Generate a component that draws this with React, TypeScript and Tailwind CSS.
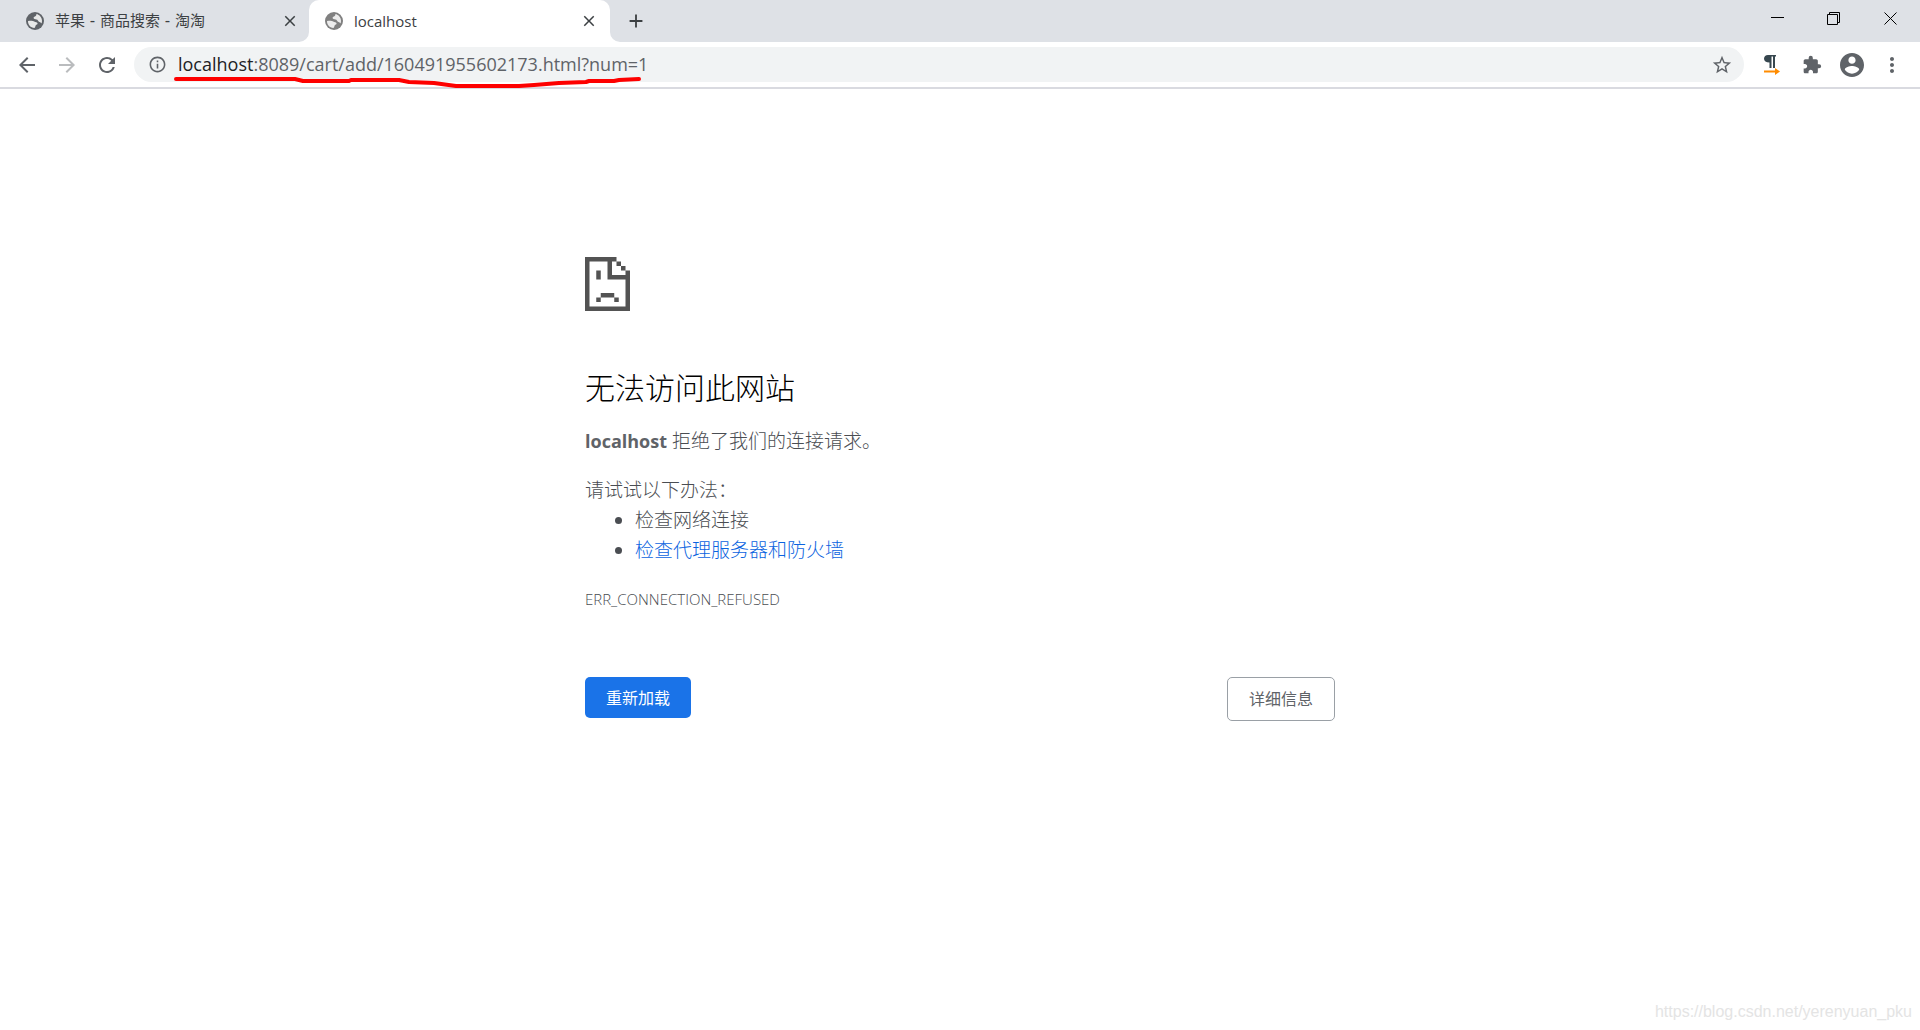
import React from "react";
import {
  MdArrowBack,
  MdArrowForward,
  MdRefresh,
  MdInfoOutline,
  MdStarBorder,
  MdExtension,
  MdMoreVert,
  MdClose,
  MdAdd,
} from "react-icons/md";

function Globe({ className }: { className: string }) {
  return (
    <svg viewBox="0 0 18 18" className={className} aria-hidden="true">
      <circle cx="9" cy="9" r="9" fill="currentColor" />
      <path
        className="fill-white/85"
        d="M2 9C4.5 8.6 7 8.4 8.2 9.4C9.4 10.4 11.6 9.8 11.6 11.4C11.6 12.6 10 12.4 9.6 13.4C9.3 14.2 9.2 15.4 8.4 16C4.6 15.8 1.8 12.6 2 9ZM10.4 2.1C13.6 2.8 16 5.6 16 9C16 10 15.8 10.8 15.5 11.6C15 11 14.6 10.2 13.6 10C12.4 9.8 12.2 8.6 11.4 7.8C10.4 7 8.4 7.4 7.8 6.4C7.2 5.4 8 4.6 9 4.4C10 4.2 10.4 3.4 10.4 2.1Z"
      />
    </svg>
  );
}

function SadPage() {
  return (
    <svg viewBox="0 0 20 24" className="h-[54px] w-[45px] text-[#535353]" fill="currentColor" aria-hidden="true">
      <path d="M0 0H14V2H12V8H18V6H20V24H0ZM2 2V22H18V10H10V2ZM14 2h2v2h-2ZM16 4h2v2h-2ZM5 6h2v4H5ZM7 16h6v2H7ZM5 18h2v2H5ZM13 18h2v2h-2Z" fillRule="evenodd" />
    </svg>
  );
}

function TabStrip() {
  return (
    <header className="flex h-[42px] items-stretch bg-[#dee1e6] text-[#3c4043]">
      <div role="tablist" className="flex">
        <div className="flex w-[309px] items-center pl-[26px] pr-[9px]">
          <button role="tab" aria-selected="false" className="flex flex-1 items-center gap-[11px] text-left font-['DejaVu_Sans','Noto_Sans_CJK_SC',sans-serif] text-[15px]">
            <Globe className="size-[18px] text-[#5f6368]" />
            苹果 - 商品搜索 - 淘淘
          </button>
          <button aria-label="关闭标签页" className="grid size-5 place-items-center">
            <MdClose className="size-[18px]" />
          </button>
        </div>
        <div className="relative flex w-[301px] items-center rounded-t-[10px] bg-white pl-4 pr-[11px]">
          <svg viewBox="0 0 10 10" className="absolute bottom-0 -left-[10px] size-[10px] fill-white" aria-hidden="true">
            <path d="M10 0V10H0A10 10 0 0 0 10 0Z" />
          </svg>
          <svg viewBox="0 0 10 10" className="absolute bottom-0 -right-[10px] size-[10px] fill-white" aria-hidden="true">
            <path d="M0 0V10H10A10 10 0 0 1 0 0Z" />
          </svg>
          <button role="tab" aria-selected="true" className="flex flex-1 items-center gap-[11px] text-left text-[15px]">
            <Globe className="size-[18px] text-[#808080]" />
            localhost
          </button>
          <button aria-label="关闭标签页" className="grid size-5 place-items-center">
            <MdClose className="size-[18px]" />
          </button>
        </div>
      </div>
      <button aria-label="新标签页" className="ml-[15px] grid w-5 place-items-center">
        <MdAdd className="size-[22px]" />
      </button>
      <div className="ml-auto flex h-9 text-black">
        <button aria-label="最小化" className="grid w-14 place-items-center">
          <svg viewBox="0 0 13 13" className="size-[13px]" stroke="currentColor" aria-hidden="true"><path d="M0 5.5H13" /></svg>
        </button>
        <button aria-label="还原" className="grid w-14 place-items-center">
          <svg viewBox="0 0 13 13" className="size-[13px]" stroke="currentColor" fill="none" aria-hidden="true"><path d="M.5 2.5H10.5V12.5H.5ZM2.5 2.5V.5H12.5V10.5H10.5" /></svg>
        </button>
        <button aria-label="关闭" className="grid w-[59px] place-items-center">
          <svg viewBox="0 0 13 13" className="size-[13px]" stroke="currentColor" aria-hidden="true"><path d="M.5 .5L12.5 12.5M12.5 .5L.5 12.5" /></svg>
        </button>
      </div>
    </header>
  );
}

function Toolbar() {
  return (
    <nav className="flex h-[47px] items-center border-b-2 border-[#d9dae0] bg-white text-[#5f6368]">
      <div className="flex gap-4 px-[15px]">
        <button aria-label="后退" className="grid size-6 place-items-center"><MdArrowBack className="size-6" /></button>
        <button aria-label="前进" className="grid size-6 place-items-center text-[#babcbe]"><MdArrowForward className="size-6" /></button>
        <button aria-label="重新加载此页" className="grid size-6 place-items-center"><MdRefresh className="size-6" /></button>
      </div>
      <div className="relative flex h-[35px] flex-1 items-center rounded-full bg-[#f1f3f4] pl-[14px] pr-[11px]">
        <MdInfoOutline className="mr-[11px] size-[19px]" />
        <label htmlFor="address" className="text-[18px] text-[#202124]">localhost</label>
        <input id="address" defaultValue=":8089/cart/add/160491955602173.html?num=1" className="min-w-0 flex-1 bg-transparent text-[18px] outline-none" />
        <button aria-label="为此标签页添加书签"><MdStarBorder className="size-[22px]" /></button>
        <svg viewBox="0 0 480 16" className="pointer-events-none absolute left-[37px] top-[27px] h-4 w-[480px]" fill="none" stroke="#fe0000" strokeWidth="4" strokeLinecap="round" strokeLinejoin="round" aria-hidden="true">
          <path d="M5 5H124L132 7H178L180 6H228L238 8L263 9L285 12H348L363 11L388 9L415 8L418 7H443L448 6L468 5" />
        </svg>
      </div>
      <div className="flex items-center gap-4 px-4">
        <button aria-label="段落扩展程序" className="grid size-6 place-items-center">
          <svg viewBox="0 0 18 20" className="h-5 w-[18px]" aria-hidden="true">
            <path d="M5 0H13V1.5H12V13H10V1.5H8.5V13H6.5V7.5C3 7.5 1 6 1 3.8C1 1.5 2.6 0 5 0Z" fill="#37474f" />
            <path d="M1 15.5H12V13L17 16.5L12 20V17.5H1Z" fill="#ff8c00" />
          </svg>
        </button>
        <button aria-label="扩展程序" className="grid size-6 place-items-center"><MdExtension className="size-5" /></button>
        <button aria-label="用户" className="flex size-6 items-center justify-center">
          <svg viewBox="2 2 20 20" className="size-6 shrink-0" fill="currentColor" aria-hidden="true">
            <path d="M12 2C6.48 2 2 6.48 2 12s4.48 10 10 10 10-4.48 10-10S17.52 2 12 2zm0 3c1.66 0 3 1.34 3 3s-1.34 3-3 3-3-1.34-3-3 1.34-3 3-3zm0 14.2c-2.5 0-4.71-1.28-6-3.22.03-1.99 4-3.08 6-3.08 1.99 0 5.97 1.09 6 3.08-1.29 1.94-3.5 3.22-6 3.22z" />
          </svg>
        </button>
        <button aria-label="自定义及控制" className="grid size-6 place-items-center"><MdMoreVert className="size-6" /></button>
      </div>
    </nav>
  );
}

export default function App() {
  return (
    <div className="flex min-h-screen flex-col bg-white font-['Open_Sans','Noto_Sans_CJK_SC',sans-serif]">
      <TabStrip />
      <Toolbar />
      <main className="mx-auto w-full max-w-[750px] flex-1 pt-[168px] text-[19px] font-light leading-[30px] text-[#4a4d52]">
        <SadPage />
        <h1 className="mt-[59px] text-[30px] font-light leading-[36px] text-black">无法访问此网站</h1>
        <p className="mt-5"><strong className="text-[18px] font-bold text-[#5f6368]">localhost</strong> 拒绝了我们的连接请求。</p>
        <p className="mt-[19px]">请试试以下办法：</p>
        <ul className="list-disc pl-[50px]">
          <li>检查网络连接</li>
          <li><a href="#proxy" className="text-[#0b63e0]">检查代理服务器和防火墙</a></li>
        </ul>
        <p className="mt-[19px] text-[15px]">ERR_CONNECTION_REFUSED</p>
        <div className="mt-[63px] flex items-start justify-between text-base font-normal text-[#5f6368]">
          <button className="h-[41px] rounded-[5px] bg-[#1a73e8] px-[21px] text-white">重新加载</button>
          <button className="h-11 rounded-[5px] border border-[#9aa0a6] px-[21px]">详细信息</button>
        </div>
      </main>
      <footer className="px-2 pb-1.5 text-right font-['Liberation_Sans',sans-serif] text-base text-[#e4e4e4]">
        https://blog.csdn.net/yerenyuan_pku
      </footer>
    </div>
  );
}
